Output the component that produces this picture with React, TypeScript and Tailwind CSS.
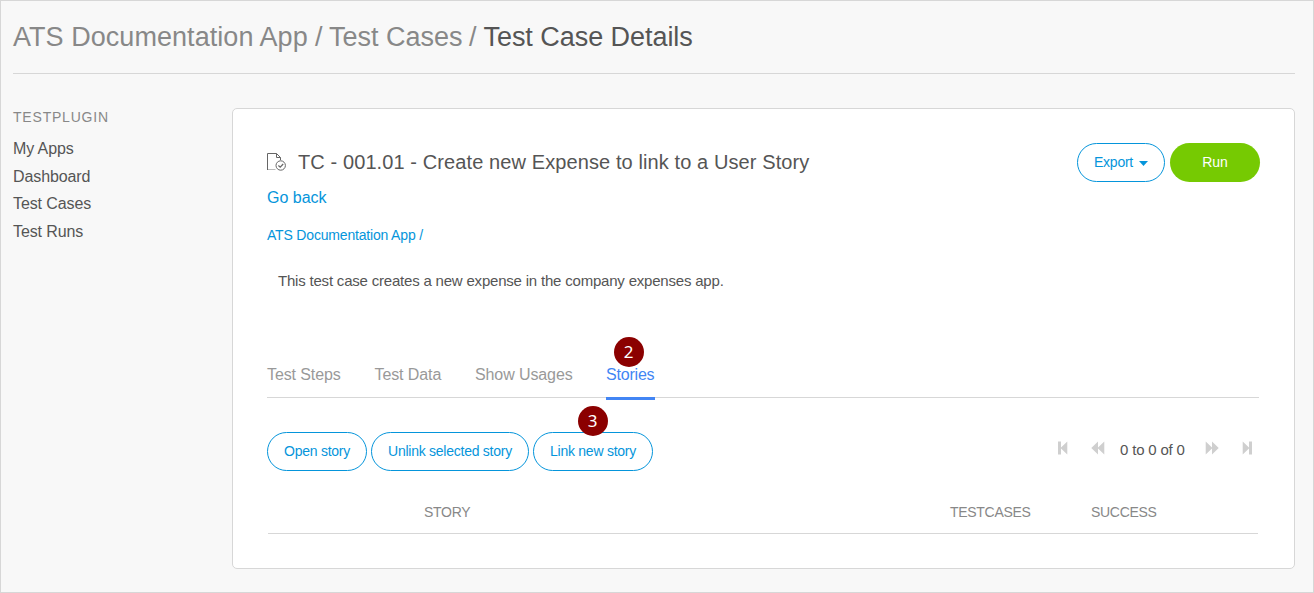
import type { ReactNode } from "react";

const navItems = ["My Apps", "Dashboard", "Test Cases", "Test Runs"];

function PillButton({ className, children }: { className: string; children: ReactNode }) {
  return (
    <button
      className={`relative flex h-[39px] items-center justify-center rounded-full border border-[#0595db] pb-px text-[14px] whitespace-nowrap text-[#0595db] ${className}`}
    >
      {children}
    </button>
  );
}

function Badge({ n, className }: { n: number; className: string }) {
  return (
    <span
      className={`absolute flex size-[30px] items-center justify-center rounded-full bg-[#8b0000] font-['Noto_Sans','DejaVu_Sans',sans-serif] text-[17px] tracking-normal text-white ${className}`}
    >
      {n}
    </span>
  );
}

function TestCaseIcon() {
  return (
    <svg className="mt-px size-[20px] shrink-0" viewBox="0 0 20 20" fill="none" stroke="#666" strokeWidth="1">
      <path d="M8.500 17.500H.5" stroke="#bbb" />
      <path d="M.5 18V1.500H9.500L13.500 5.500V8" />
      <path d="M9.500 1.500V5.500H13.500" />
      <circle cx="13.700" cy="13.500" r="4.700" />
      <path d="M11.400 13.500L13.200 15.200L16.200 12" strokeWidth="1.200" />
    </svg>
  );
}

function FirstIcon({ flip = false }: { flip?: boolean }) {
  return (
    <svg className={`h-[14px] w-[10px] ${flip ? "-scale-x-100" : ""}`} viewBox="0 0 10 14" fill="#cfcfcf">
      <path d="M0 .5H3V13.500H0ZM9.300 .5V13.500L2.500 7Z" />
    </svg>
  );
}

function RewindIcon({ flip = false }: { flip?: boolean }) {
  return (
    <svg className={`h-[14px] w-[14px] ${flip ? "-scale-x-100" : ""}`} viewBox="0 0 14 14" fill="#cfcfcf">
      <path d="M7 .5V13.500L.3 7ZM13.300 .5V13.500L6.500 7Z" />
    </svg>
  );
}

export default function App() {
  return (
    <div className="h-[593px] w-[1314px] overflow-hidden border border-[#d7d7d7] bg-[#f8f8f8] pl-3 font-['Liberation_Sans',Arial,sans-serif] text-[#555]">
      <header className="flex h-[73px] w-[1282px] border-b border-[#d7d7d7] pt-[18px] text-[27px] leading-[36px] whitespace-pre text-[#888]">
        <span className="w-[302px] tracking-[0.05px]">ATS Documentation App</span>
        <span className="w-[14px]">/</span>
        <span className="w-[140px]">Test Cases</span>
        <span className="w-[14.500px]">/</span>
        <h1 className="tracking-[-0.05px] text-[#555]">Test Case Details</h1>
      </header>

      <div className="flex pt-[34px]">
        <nav className="w-[219px]">
          <h2 className="mb-[9px] text-[14px] leading-[18px] tracking-[0.8px] text-[#888]">TESTPLUGIN</h2>
          <ul>
            {navItems.map((item) => (
              <li key={item} className="h-[27.6px] text-[16px] leading-[27.6px] tracking-[-0.1px]">
                {item}
              </li>
            ))}
          </ul>
        </nav>

        <main className="h-[461px] w-[1063px] rounded-[5px] border border-[#d7d7d7] bg-white px-[34px] pt-[34px]">
          <div className="flex justify-between">
            <div className="flex h-[39px] pt-[8px]">
              <TestCaseIcon />
              <h2 className="ml-[11px] text-[20px] leading-[22px] tracking-[0.1px] whitespace-nowrap">
                TC - 001.01 - Create new Expense to link to a User Story
              </h2>
            </div>
            <div className="flex gap-[5px]">
              <PillButton className="w-[88px] gap-[6px] tracking-[-0.25px]">
                Export
                <svg className="mt-[3px] h-[5px] w-[9px]" viewBox="0 0 9 5" fill="#0595db">
                  <path d="M0 0H9L4.500 5Z" />
                </svg>
              </PillButton>
              <button className="h-[39px] w-[90px] rounded-full bg-[#76ca02] pb-px text-[14px] text-white">Run</button>
            </div>
          </div>

          <a className="mt-[6px] block text-[16px] leading-[20px] text-[#0595db]">Go back</a>
          <a className="mt-[18px] block text-[14px] leading-[18px] tracking-[-0.18px] text-[#0595db]">
            ATS Documentation App /
          </a>
          <p className="mt-[27px] pl-[11px] text-[15px] leading-[20px] tracking-[-0.2px]">
            This test case creates a new expense in the company expenses app.
          </p>

          <div className="mt-[74px] flex h-[33px] w-[992px] border-b border-[#d7d7d7] text-[16px] leading-[20px] tracking-[-0.1px] text-[#999]">
            <span className="w-[107.500px]">Test Steps</span>
            <span className="w-[100.500px]">Test Data</span>
            <span className="w-[131px]">Show Usages</span>
            <span className="relative h-[35px] w-[49px] border-b-[3px] border-[#4285f4] tracking-[-0.2px] text-[#4285f4]">
              Stories
              <Badge n={2} className="-top-[28.500px] left-[7.500px]" />
            </span>
          </div>

          <div className="mt-[34px] flex items-center justify-between">
            <div className="flex gap-[4px] tracking-[-0.25px]">
              <PillButton className="w-[100px]">Open story</PillButton>
              <PillButton className="w-[158px]">Unlink selected story</PillButton>
              <PillButton className="w-[120px]">
                Link new story
                <Badge n={3} className="-top-[27.500px] left-[43.500px]" />
              </PillButton>
            </div>
            <div className="flex items-start pr-[8px] pb-[4px]">
              <FirstIcon />
              <span className="ml-[23px] flex">
                <RewindIcon />
              </span>
              <span className="ml-[15px] w-[85px] text-[15px] leading-[18px] tracking-[-0.18px]">0 to 0 of 0</span>
              <RewindIcon flip />
              <span className="ml-[23px] flex">
                <FirstIcon flip />
              </span>
            </div>
          </div>

          <div className="mt-[20px] ml-px flex h-[43px] w-[990px] border-b border-[#d7d7d7] pt-[12px] pl-[156px] text-[14px] leading-[18px] tracking-[-0.3px] text-[#888]">
            <span className="w-[526px]">STORY</span>
            <span className="w-[141px]">TESTCASES</span>
            <span>SUCCESS</span>
          </div>
        </main>
      </div>
    </div>
  );
}
